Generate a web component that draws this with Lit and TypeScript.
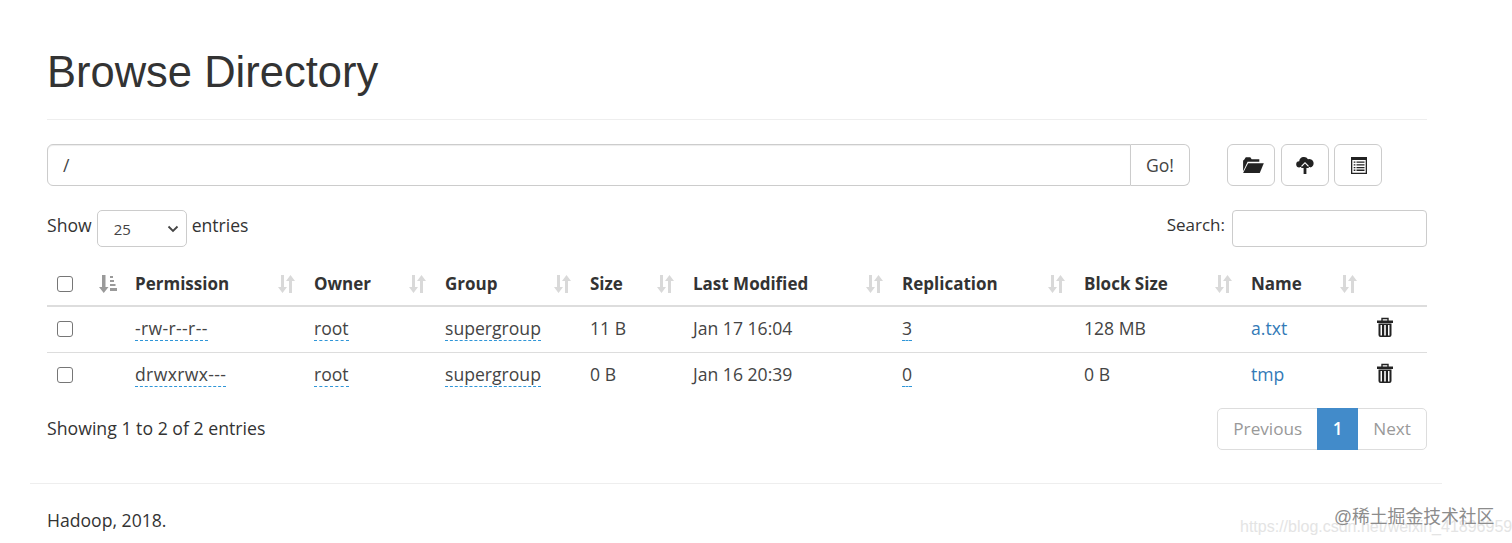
import { LitElement, html, css } from "lit";
import { customElement } from "lit/decorators.js";

const sortIcon = html`<svg class="sort" viewBox="0 0 18 20" width="18" height="20"><path fill="currentColor" d="M4 1h3v12h3l-4.500 6L1 13h3zM12 19V7H9l4.500-6L18 7h-3v12z"/></svg>`;
const sortActive = html`<svg class="sort active" viewBox="0 0 18 20" width="18" height="20"><path fill="currentColor" d="M3 1h3.500v12H9.500l-4.750 6L0 13h3z"/><path fill="currentColor" d="M11 2h3v2h-3zM11 6h4v2h-4zM11 10h5.500v2H11zM11 14h7v3h-7z"/></svg>`;
const trash = html`<svg class="trash" viewBox="0 0 16 20" width="16" height="20"><path fill="none" stroke="currentColor" stroke-width="1.400" d="M5 4V1.500h6V4"/><path fill="currentColor" d="M0 3.500h16v2.500H0z"/><path fill="currentColor" fill-rule="evenodd" d="M1.500 6.500h13V18a2 2 0 0 1-2 2h-9a2 2 0 0 1-2-2zM3.500 8V18.500h1.500V8zM7.200 8V18.500h1.600V8zM11 8V18.500h1.500V8z"/></svg>`;

const rows = [
  { p: "-rw-r--r--", o: "root", g: "supergroup", s: "11 B", m: "Jan 17 16:04", r: "3", b: "128 MB", n: "a.txt" },
  { p: "drwxrwx---", o: "root", g: "supergroup", s: "0 B", m: "Jan 16 20:39", r: "0", b: "0 B", n: "tmp" },
];

const heads: [string, string][] = [
  ["Permission", "c-perm"], ["Owner", "c-owner"], ["Group", "c-group"], ["Size", "c-size"],
  ["Last Modified", "c-mod"], ["Replication", "c-rep"], ["Block Size", "c-block"], ["Name", "c-name"],
];

@customElement("app-root")
export class AppRoot extends LitElement {
  static styles = css`
    :host { display: block; height: 543px; overflow: hidden; background: #fff; color: #333;
      font-family: "Open Sans", "Noto Sans", sans-serif; font-size: 17.600px; line-height: 26px; position: relative; }
    .container { margin: 0 70px 0 30px; padding: 0 15px 0 17px; }
    .head { border-bottom: 1px solid #eee; margin: 0 0 24px; height: 120px; box-sizing: border-box; padding-top: 46px; }
    h1 { margin: 0; font: 400 43.500px/52px "Liberation Sans", Arial, sans-serif; color: #333; }
    .toolbar { display: flex; height: 42px; }
    .path { flex: 1; display: flex; min-width: 0; margin-right: 37px; }
    .path-text { flex: 1; border: 1px solid #ccc; border-radius: 6px 0 0 6px; padding: 0 15px; line-height: 40px;
      box-shadow: inset 0 1px 1px rgba(0,0,0,.075); color: #444; }
    .go { width: 59px; box-sizing: border-box; text-align: center; border: 1px solid #ccc; border-left: 0;
      border-radius: 0 6px 6px 0; line-height: 40px; color: #444; }
    .tools { display: flex; gap: 5.500px; width: 200px; }
    .tool { width: 48px; height: 42px; box-sizing: border-box; border: 1px solid #ccc; border-radius: 6px;
      display: flex; align-items: center; justify-content: center; color: #222; }
    .folder { margin-left: 3px; }
    .list { margin-left: 1px; }
    .controls { display: flex; justify-content: space-between; align-items: flex-start; margin-top: 24px; height: 37px; }
    .show, .search { display: flex; align-items: center; gap: 5px; height: 37px; }
    .show span, .search span { position: relative; top: -4px; }
    .search span { font-size: 17px; }
    .select { width: 90px; height: 37px; box-sizing: border-box; border: 1px solid #ccc; border-radius: 5px;
      display: flex; align-items: center; justify-content: space-between; padding: 0 7px 0 16px; font-size: 15px; color: #444; }
    .select b { font-weight: 400; }
    .search-input { width: 195px; height: 37px; box-sizing: border-box; border: 1px solid #ccc; border-radius: 4px; margin-left: 2px; }
    table { width: 1380px; border-collapse: collapse; table-layout: fixed; margin-top: 15px; }
    th, td { padding: 0; text-align: left; vertical-align: middle; }
    th { height: 43px; font-weight: 700; color: #333; border-bottom: 2px solid #ddd; font-size: 17px; }
    td { height: 46px; border-bottom: 1px solid #ddd; color: #444; padding-bottom: 3px; box-sizing: border-box; }
    tr:last-child td { border-bottom: 0; }
    td .cb { margin-top: 3px; }
    .thc { display: flex; align-items: center; justify-content: space-between; padding-right: 19px; }
    .sort { color: #d9d9d9; display: block; }
    .sort.active { color: #9a9a9a; margin-left: 5px; }
    .cb { width: 16px; height: 16px; box-sizing: border-box; border: 1px solid #767676; border-radius: 3px; margin-left: 10px; background: #fff; display: block; }
    .ed { border-bottom: 1px dashed #2f96d8; padding-bottom: 1px; display: inline-block; line-height: 22px; }
    .perm { letter-spacing: .35px; }
    .name { color: #337ab7; }
    .trash { color: #222; display: block; margin: -2px 0 0 1px; }
    .c-check { width: 47px; } .c-sort { width: 41px; } .c-perm { width: 179px; } .c-owner { width: 131px; }
    .c-group { width: 145px; } .c-size { width: 103px; } .c-mod { width: 209px; } .c-rep { width: 182px; }
    .c-block { width: 167px; } .c-name { width: 125px; }
    .foot { display: flex; justify-content: space-between; align-items: flex-start; margin-top: 10px; }
    .info { line-height: 26px; margin-top: 7px; font-size: 17.700px; }
    .pager { display: flex; height: 42px; border: 1px solid #ddd; border-radius: 5px; box-sizing: border-box; color: #999; line-height: 40px; font-size: 17.200px; }
    .pager div { padding: 0 15px; }
    .pager .cur { background: #428bca; color: #fff; width: 41px; box-sizing: border-box; text-align: center; margin: -1px 0; line-height: 42px; padding: 0; font-weight: 600; }
    .footer { margin: 33px 70px 0 30px; border-top: 1px solid #eee; padding: 23px 17px 0; }
    .wm { position: absolute; left: 1240px; top: 518px; font: 16px "Liberation Sans", sans-serif; color: #e4e4e4; white-space: nowrap; }
    .wm2 { position: absolute; left: 1334px; top: 502px; font: 17.800px "Liberation Sans", "Noto Sans CJK SC", sans-serif; color: #8c8c8c; white-space: nowrap; }
  `;

  render() {
    return html`
      <div class="container">
        <div class="head"><h1>Browse Directory</h1></div>
        <div class="toolbar">
          <div class="path"><div class="path-text">/</div><div class="go">Go!</div></div>
          <div class="tools">
            <div class="tool"><svg class="folder" viewBox="0 0 24 20" width="22" height="18"><path fill="currentColor" d="M2 4.500 4 1.500h5l1.500 2H19v3H6L1 17V5z"/><path fill="currentColor" d="M6.500 8H24l-4.500 11H1z"/></svg></div>
            <div class="tool"><svg viewBox="0 0 18 18" width="18" height="18"><path fill="currentColor" d="M3.500 11.500A3 3 0 0 1 3.200 5.200 4.800 4.800 0 0 1 12 3.200 4 4 0 0 1 14.500 11.500L9 6z"/><path fill="currentColor" d="M3.500 7.500 6 11H3.500zM14.500 7.500 12 11h2.500z"/><path fill="currentColor" d="M9 7.500l4.200 4.500h-2.800v6H7.600v-6H4.800z"/></svg></div>
            <div class="tool"><svg class="list" viewBox="0 0 16 17" width="16" height="17"><path fill="currentColor" fill-rule="evenodd" d="M0 0h16v17H0zM1.300 3v12.700h13.400V3z"/><path fill="currentColor" d="M2.700 4.500h1.700v1.300H2.700zM5.500 4.500h8v1.300h-8zM2.700 7.200h1.700v1.300H2.700zM5.500 7.200h8v1.300h-8zM2.700 9.900h1.700v1.300H2.700zM5.500 9.900h8v1.300h-8zM2.700 12.600h1.700v1.300H2.700zM5.500 12.600h8v1.300h-8z"/></svg></div>
          </div>
        </div>
        <div class="controls">
          <div class="show"><span>Show</span>
            <div class="select"><b>25</b><svg viewBox="0 0 12 8" width="12" height="8"><path d="M1.500 1.500 6 6l4.500-4.500" fill="none" stroke="#444" stroke-width="1.800"/></svg></div>
            <span>entries</span></div>
          <div class="search"><span>Search:</span><div class="search-input"></div></div>
        </div>
        <table>
          <thead><tr>
            <th class="c-check"><div class="cb"></div></th>
            <th class="c-sort">${sortActive}</th>
            ${heads.map(([t, c]) => html`<th class=${c}><div class="thc">${t}${sortIcon}</div></th>`)}
            <th></th>
          </tr></thead>
          <tbody>
            ${rows.map((r) => html`<tr>
              <td><div class="cb"></div></td><td></td>
              <td><span class="ed perm">${r.p}</span></td>
              <td><span class="ed">${r.o}</span></td>
              <td><span class="ed">${r.g}</span></td>
              <td>${r.s}</td>
              <td>${r.m}</td>
              <td><span class="ed">${r.r}</span></td>
              <td>${r.b}</td>
              <td class="name">${r.n}</td>
              <td>${trash}</td>
            </tr>`)}
          </tbody>
        </table>
        <div class="foot">
          <div class="info">Showing 1 to 2 of 2 entries</div>
          <div class="pager"><div>Previous</div><div class="cur">1</div><div>Next</div></div>
        </div>
      </div>
      <div class="footer">Hadoop, 2018.</div>
      <div class="wm">https://blog.csdn.net/weixin_41896959</div>
      <div class="wm2">@稀土掘金技术社区</div>
    `;
  }
}
